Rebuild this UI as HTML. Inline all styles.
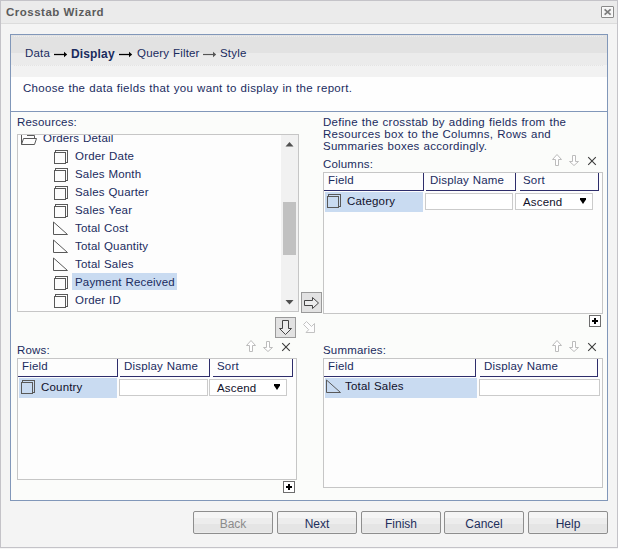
<!DOCTYPE html>
<html><head><meta charset="utf-8">
<style>
*{box-sizing:border-box}
html,body{margin:0;padding:0;width:618px;height:549px;overflow:hidden;background:#f5f5f5}
body{position:relative;font-family:"Liberation Sans",sans-serif}
.a{position:absolute}
.t{position:absolute;font:11.5px/14px "Liberation Sans",sans-serif;letter-spacing:.18px;word-spacing:.4px;white-space:nowrap;color:#1a2b5e}
#outer{left:0;top:0;width:618px;height:548px;border:1px solid #c4c3c8;background:#f4f4f4}
#title{left:1px;top:1px;width:616px;height:23px;background:#ebebeb;border-bottom:1px solid #dcdcdc}
#close{left:601px;top:6px;width:13px;height:12px;border:1px solid #8a8a8a;border-radius:1px;background:#f4f4f4;box-shadow:inset 0 0 0 1px #fafafa}
#wiz{left:10px;top:34px;width:598px;height:467px;border:1px solid #8197b9;background:#fbfcfa}
#hdr{left:11px;top:35px;width:596px;height:42px;background:linear-gradient(#e2e2e2 0,#e2e2e2 18px,#ebebeb 18px,#ebebeb 30px,#f2f2f2 30px)}
.dots{position:absolute;height:1px;background:repeating-linear-gradient(90deg,#eeeeee 0 1px,transparent 1px 2px)}
#instr{left:11px;top:77px;width:596px;height:35px;background:#fefefe;border-bottom:1px solid #8197b9}
.box{position:absolute;border:1px solid #c6c6c6;background:#fdfdfd}
.sel{position:absolute;background:#c9dbf1}
.hc{position:absolute;border-right:1px solid #2e2d6b;border-bottom:1px solid #2e2d6b}
.inp{position:absolute;border:1px solid #cbcbcb;background:#fff}
.btn{position:absolute;top:511px;width:80px;height:23px;border:1px solid #8e8e8e;border-radius:2px;background:linear-gradient(#f5f5f5 0,#f5f5f5 6px,#ededed 6px,#ededed 12px,#e5e5e5 12px,#e5e5e5 20px,#ebebeb 20px);font:12px/25px "Liberation Sans",sans-serif;text-align:center;color:#1e2f5c}
.plus{position:absolute;width:12px;height:12px;border:1px solid #6e6e6e;background:#fff}
.plus:before{content:"";position:absolute;left:2px;top:4px;width:6px;height:2px;background:#000}
.plus:after{content:"";position:absolute;left:4px;top:2px;width:2px;height:6px;background:#000}
svg{position:absolute;overflow:visible}
</style></head><body>
<div id="outer" class="a"></div>
<div id="title" class="a"></div>
<div class="t" style="left:6px;top:5px;font-size:11.5px;font-weight:bold;color:#5b5b5b;letter-spacing:.5px;word-spacing:0">Crosstab Wizard</div>
<div id="close" class="a"></div>
<svg style="left:601px;top:6px" width="13" height="12"><path d="M3.6 3.4L9.6 8.6M9.6 3.4L3.6 8.6" stroke="#7c7c7c" stroke-width="1.7" fill="none"/></svg>

<div id="wiz" class="a"></div>
<div id="hdr" class="a"></div>
<div id="instr" class="a"></div>
<div class="dots" style="left:14px;top:36px;width:590px"></div>
<div class="dots" style="left:14px;top:65px;width:590px;background:repeating-linear-gradient(90deg,#e4e4e4 0 1px,transparent 1px 2px)"></div>

<!-- breadcrumb -->
<div class="t" style="left:25px;top:46px">Data</div>
<svg style="left:54px;top:50px" width="14" height="8"><path d="M0 4.5H11" stroke="#000" stroke-width="1.3" fill="none"/><path d="M10 1.8L13.2 4.5L10 7.2Z" fill="#000"/></svg>
<div class="t" style="left:71px;top:47px;font-size:12px;letter-spacing:.15px;font-weight:bold">Display</div>
<svg style="left:119px;top:50px" width="14" height="8"><path d="M0 4.5H11" stroke="#000" stroke-width="1.3" fill="none"/><path d="M10 1.8L13.2 4.5L10 7.2Z" fill="#000"/></svg>
<div class="t" style="left:137px;top:46px">Query Filter</div>
<svg style="left:203px;top:50px" width="14" height="8"><path d="M0 4.5H11" stroke="#555" stroke-width="1.2" fill="none"/><path d="M10 1.8L13.2 4.5L10 7.2Z" fill="#555"/></svg>
<div class="t" style="left:220px;top:46px">Style</div>

<div class="t" style="left:23px;top:81px;letter-spacing:.31px;word-spacing:.4px">Choose the data fields that you want to display in the report.</div>

<div class="t" style="left:17px;top:115px">Resources:</div>
<div class="box" style="left:17px;top:134px;width:282px;height:178px;background:#fdfdfd"></div>
<div class="a" style="left:281px;top:135px;width:17px;height:176px;background:#f1f1f1"></div>
<div class="a" style="left:283px;top:202px;width:13px;height:53px;background:#c1c1c1"></div>
<div class="sel" style="left:72px;top:273px;width:105px;height:17px"></div>
<svg style="left:0;top:0" width="618" height="549"><path d="M285.5 146.5 H293.5 L289.5 142 Z" fill="#505050"/><path d="M285.5 300 H293.5 L289.5 304.5 Z" fill="#505050"/><path d="M21.5 135 V144.5 H34.5 L36.5 138.5 H23.5 L21.5 144.5 M27 135.5 H34.5 V138.5" fill="none" stroke="#595959"/><rect x="55.5" y="150.5" width="12" height="12" fill="#fdfdfd" stroke="#595959"/><rect x="54.5" y="152.5" width="11" height="11" fill="#fdfdfd" stroke="#595959"/><rect x="55.5" y="168.5" width="12" height="12" fill="#fdfdfd" stroke="#595959"/><rect x="54.5" y="170.5" width="11" height="11" fill="#fdfdfd" stroke="#595959"/><rect x="55.5" y="186.5" width="12" height="12" fill="#fdfdfd" stroke="#595959"/><rect x="54.5" y="188.5" width="11" height="11" fill="#fdfdfd" stroke="#595959"/><rect x="55.5" y="204.5" width="12" height="12" fill="#fdfdfd" stroke="#595959"/><rect x="54.5" y="206.5" width="11" height="11" fill="#fdfdfd" stroke="#595959"/><path d="M53.5 222 V234.5 H67.5 Z" fill="none" stroke="#595959" stroke-linejoin="miter"/><path d="M53.5 240 V252.5 H67.5 Z" fill="none" stroke="#595959" stroke-linejoin="miter"/><path d="M53.5 258 V270.5 H67.5 Z" fill="none" stroke="#595959" stroke-linejoin="miter"/><rect x="55.5" y="276.5" width="12" height="12" fill="#fdfdfd" stroke="#595959"/><rect x="54.5" y="278.5" width="11" height="11" fill="#fdfdfd" stroke="#595959"/><rect x="55.5" y="294.5" width="12" height="12" fill="#fdfdfd" stroke="#595959"/><rect x="54.5" y="296.5" width="11" height="11" fill="#fdfdfd" stroke="#595959"/></svg>
<div class="t" style="left:43px;top:131px;clip-path:inset(4px 0 0 0)">Orders Detail</div>
<div class="t" style="left:75px;top:149px">Order Date</div>
<div class="t" style="left:75px;top:167px">Sales Month</div>
<div class="t" style="left:75px;top:185px">Sales Quarter</div>
<div class="t" style="left:75px;top:203px">Sales Year</div>
<div class="t" style="left:75px;top:221px">Total Cost</div>
<div class="t" style="left:75px;top:239px">Total Quantity</div>
<div class="t" style="left:75px;top:257px">Total Sales</div>
<div class="t" style="left:75px;top:275px">Payment Received</div>
<div class="t" style="left:75px;top:293px">Order ID</div>
<div class="t" style="left:323px;top:116px;line-height:12px;letter-spacing:.27px;word-spacing:.5px">Define the crosstab by adding fields from the<br>Resources box to the Columns, Rows and<br>Summaries boxes accordingly.</div>
<div class="a" style="left:301px;top:292px;width:21px;height:21px;border:1px solid #9a9a9a;background:#e2e2e2"></div>
<div class="a" style="left:275px;top:317px;width:21px;height:21px;border:1px solid #9a9a9a;background:#e2e2e2"></div>
<svg style="left:0;top:0" width="618" height="549"><path d="M304.5 300.5 H312.5 V297.5 L318.5 303 L312.5 308.5 V305.5 H304.5 Z" fill="#ececec" stroke="#444"/><path d="M282.5 320.5 H288.5 V328.5 H291.5 L285.5 334.5 L279.5 328.5 H282.5 Z" fill="#ececec" stroke="#444"/><path d="M303.5 324.5 L306.5 321.5 L311.5 326.5 L314.5 323.5 V332.5 H306 L308.7 329.7 Z" fill="#fdfdfd" stroke="#c2c2c2"/></svg>
<div class="t" style="left:323px;top:157px">Columns:</div>
<div class="box" style="left:323px;top:172px;width:280px;height:142px"></div>
<div class="hc" style="left:324px;top:173px;width:100px;height:18px"></div>
<div class="hc" style="left:426px;top:173px;width:90px;height:18px"></div>
<div class="hc" style="left:520px;top:173px;width:79px;height:18px"></div>
<div class="t" style="left:328px;top:173px">Field</div>
<div class="t" style="left:430px;top:173px">Display Name</div>
<div class="t" style="left:523px;top:173px">Sort</div>
<div class="sel" style="left:325px;top:192px;width:98px;height:20px"></div>
<div class="inp" style="left:425px;top:193px;width:88px;height:17px"></div>
<div class="inp" style="left:515px;top:193px;width:78px;height:17px"></div>
<div class="t" style="left:347px;top:194px;color:#10102a">Category</div>
<div class="t" style="left:523px;top:195px;color:#10102a">Ascend</div>
<div class="plus" style="left:589px;top:315px"></div>
<div class="t" style="left:17px;top:343px">Rows:</div>
<div class="box" style="left:17px;top:358px;width:280px;height:122px"></div>
<div class="hc" style="left:18px;top:359px;width:100px;height:18px"></div>
<div class="hc" style="left:120px;top:359px;width:90px;height:18px"></div>
<div class="hc" style="left:213px;top:359px;width:80px;height:18px"></div>
<div class="t" style="left:22px;top:359px">Field</div>
<div class="t" style="left:124px;top:359px">Display Name</div>
<div class="t" style="left:217px;top:359px">Sort</div>
<div class="sel" style="left:19px;top:378px;width:98px;height:20px"></div>
<div class="inp" style="left:119px;top:379px;width:89px;height:17px"></div>
<div class="inp" style="left:209px;top:379px;width:78px;height:17px"></div>
<div class="t" style="left:41px;top:380px;color:#10102a">Country</div>
<div class="t" style="left:217px;top:381px;color:#10102a">Ascend</div>
<div class="plus" style="left:283px;top:481px"></div>
<div class="t" style="left:323px;top:343px">Summaries:</div>
<div class="box" style="left:323px;top:358px;width:280px;height:130px"></div>
<div class="hc" style="left:324px;top:359px;width:152px;height:18px"></div>
<div class="hc" style="left:480px;top:359px;width:118px;height:18px"></div>
<div class="t" style="left:328px;top:359px">Field</div>
<div class="t" style="left:484px;top:359px">Display Name</div>
<div class="sel" style="left:325px;top:378px;width:152px;height:20px"></div>
<div class="inp" style="left:479px;top:379px;width:121px;height:17px"></div>
<div class="t" style="left:345px;top:379px;color:#10102a">Total Sales</div>
<svg style="left:0;top:0" width="618" height="549"><rect x="328.5" y="194.5" width="12" height="12" fill="#c9dbf1" stroke="#595959"/><rect x="327.5" y="196.5" width="11" height="11" fill="#c9dbf1" stroke="#595959"/><rect x="22.5" y="380.5" width="12" height="12" fill="#c9dbf1" stroke="#595959"/><rect x="21.5" y="382.5" width="11" height="11" fill="#c9dbf1" stroke="#595959"/><path d="M326.5 380 V392.5 H340.5 Z" fill="none" stroke="#595959" stroke-linejoin="miter"/><path d="M580 198 H586 V199.6 L583 204 L580 199.6 Z" fill="#000"/><path d="M274 384 H280 V385.6 L277 390 L274 385.6 Z" fill="#000"/><g transform="translate(550,152)"><path d="M7 2.5 L11.5 7.5 H8.5 V13.5 H5.5 V7.5 H2.5 Z" fill="#fff" stroke="#bcbcbc"/><path d="M22.5 3.5 H25.5 V9.5 H28.5 L24 13.5 L19.5 9.5 H22.5 Z" fill="#fff" stroke="#bcbcbc"/><path d="M38.2 5.2 L45.8 12.8 M45.8 5.2 L38.2 12.8" stroke="#3c3c3c" stroke-width="1.1"/></g><g transform="translate(550,338)"><path d="M7 2.5 L11.5 7.5 H8.5 V13.5 H5.5 V7.5 H2.5 Z" fill="#fff" stroke="#bcbcbc"/><path d="M22.5 3.5 H25.5 V9.5 H28.5 L24 13.5 L19.5 9.5 H22.5 Z" fill="#fff" stroke="#bcbcbc"/><path d="M38.2 5.2 L45.8 12.8 M45.8 5.2 L38.2 12.8" stroke="#3c3c3c" stroke-width="1.1"/></g><g transform="translate(244,338)"><path d="M7 2.5 L11.5 7.5 H8.5 V13.5 H5.5 V7.5 H2.5 Z" fill="#fff" stroke="#bcbcbc"/><path d="M22.5 3.5 H25.5 V9.5 H28.5 L24 13.5 L19.5 9.5 H22.5 Z" fill="#fff" stroke="#bcbcbc"/><path d="M38.2 5.2 L45.8 12.8 M45.8 5.2 L38.2 12.8" stroke="#3c3c3c" stroke-width="1.1"/></g></svg>

<!-- buttons -->
<div class="btn" style="left:193px;color:#8b8b8b">Back</div>
<div class="btn" style="left:277px">Next</div>
<div class="btn" style="left:361px">Finish</div>
<div class="btn" style="left:444px">Cancel</div>
<div class="btn" style="left:528px">Help</div>
</body></html>
